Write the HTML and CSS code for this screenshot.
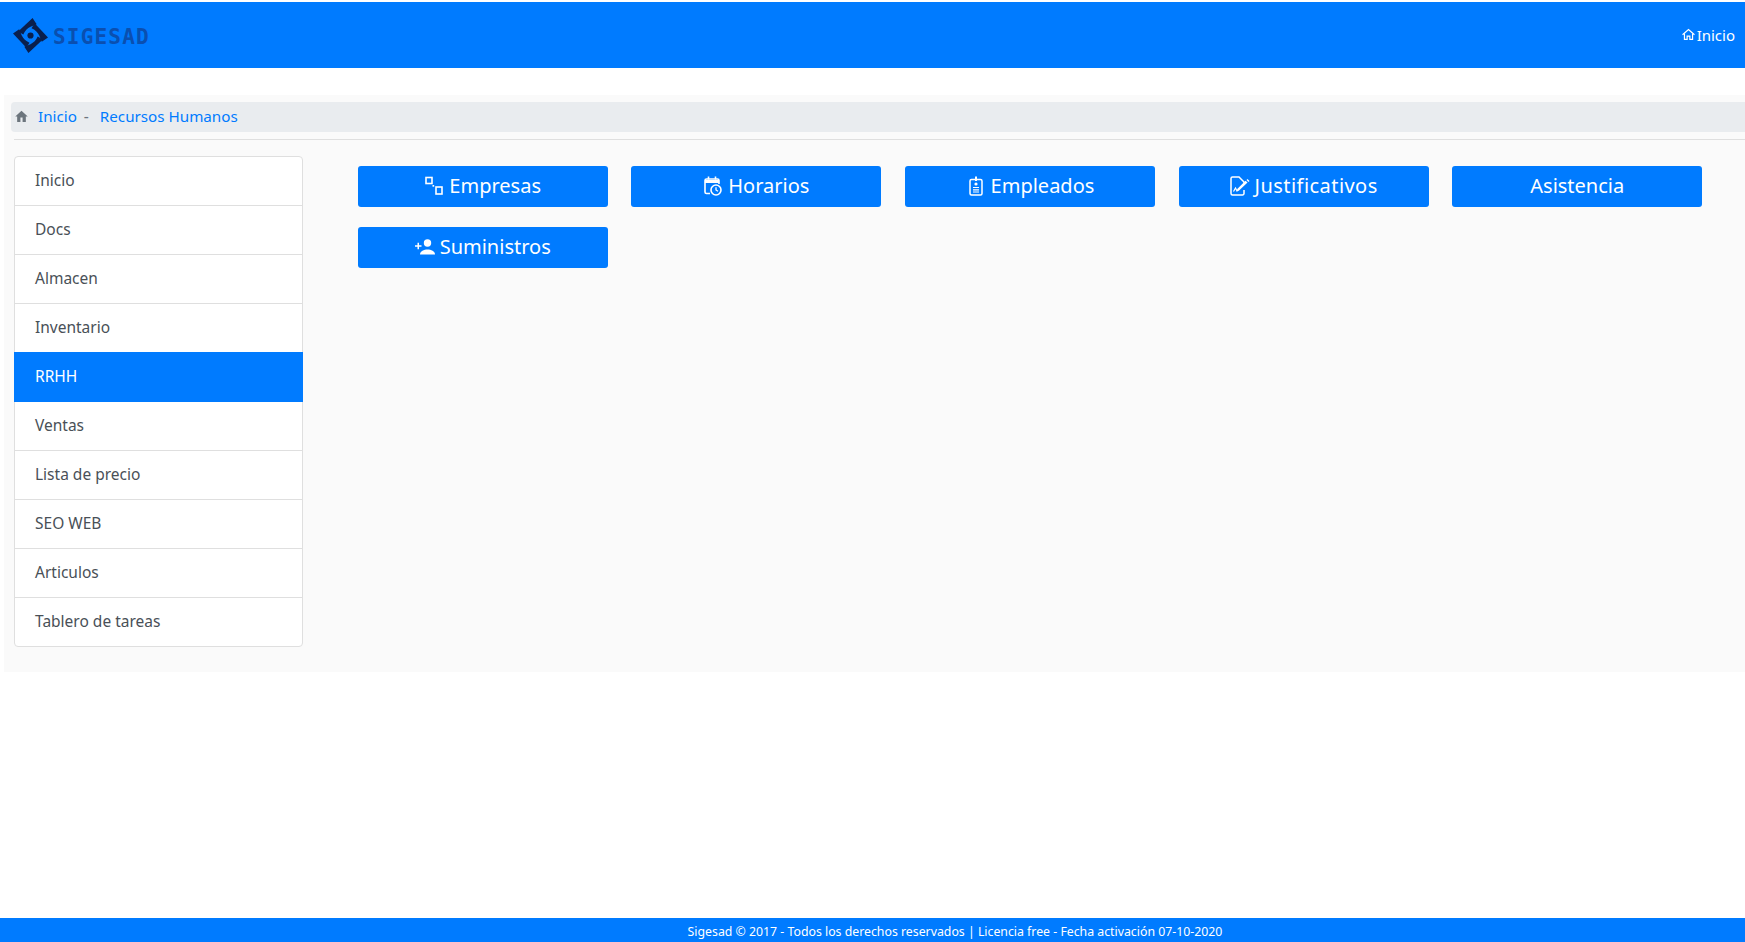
FILE: index.html
```html
<!DOCTYPE html>
<html lang="es">
<head>
    <meta charset="UTF-8">
    <meta name="viewport" content="width=device-width, initial-scale=1.0">
    <title>Sigesad</title>
    <link rel="stylesheet" href="styles.css">
</head>
<body>
    <header class="topbar">
        <a class="brand" href="#">
            <svg class="brand-logo" viewBox="0 0 34 34" fill="#0a1f4d">
                <path d="M5 13L19 0l4 6-6 2.500C14 10 11.500 12.500 10 16z"/>
                <path transform="rotate(90 17 17)" d="M5 13L19 0l4 6-6 2.500C14 10 11.500 12.500 10 16z"/>
                <path transform="rotate(180 17 17)" d="M5 13L19 0l4 6-6 2.500C14 10 11.500 12.500 10 16z"/>
                <path transform="rotate(270 17 17)" d="M5 13L19 0l4 6-6 2.500C14 10 11.500 12.500 10 16z"/>
                <circle cx="17" cy="17" r="3"/>
            </svg>
            <span class="brand-name">SIGESAD</span>
        </a>
        <a class="top-link" href="#">
            <svg class="top-icon" viewBox="0 0 24 24" fill="none" stroke="#fff" stroke-width="2.200">
                <path d="M1 12.500L12 3l11 9.500"/>
                <path d="M4.500 10v11h5v-6h5v6h5V10"/>
            </svg>Inicio
        </a>
    </header>

    <main class="content">
        <nav class="crumbs">
            <svg class="crumb-icon" viewBox="0 0 24 24" fill="#6c757d">
                <path d="M10 22v-8h4v8h6v-10h3.500L12 1.500.5 12H4v10z"/>
            </svg>
            <a href="#">Inicio</a>
            <span class="crumb-sep">-</span>
            <a href="#">Recursos Humanos</a>
        </nav>
        <hr class="rule">

        <div class="columns">
            <ul class="side-menu">
                <li>Inicio</li>
                <li>Docs</li>
                <li>Almacen</li>
                <li>Inventario</li>
                <li class="active">RRHH</li>
                <li>Ventas</li>
                <li>Lista de precio</li>
                <li>SEO WEB</li>
                <li>Articulos</li>
                <li>Tablero de tareas</li>
            </ul>

            <div class="actions">
                <a class="action" href="#">
                    <svg class="action-icon" viewBox="0 0 20 20" fill="none" stroke="#fff" stroke-width="1.600">
                        <rect x="2" y="1.500" width="6" height="6"/>
                        <rect x="12" y="11" width="6" height="7"/>
                        <rect x="8.500" y="9" width="1.700" height="1.700" fill="#fff" stroke="none"/>
                    </svg>Empresas
                </a>
                <a class="action" href="#">
                    <svg class="action-icon" viewBox="0 0 20 20" fill="none" stroke="#fff" stroke-width="1.600">
                        <path d="M7 17.500H3.500A1.500 1.500 0 0 1 2 16V4.500A1.500 1.500 0 0 1 3.500 3h11A1.500 1.500 0 0 1 16 4.500V8"/>
                        <path d="M2 5.500h14" stroke-width="3"/>
                        <path d="M5.500 .5v3M12.500 .5v3"/>
                        <circle cx="13" cy="14" r="5"/>
                        <path d="M13 11.200V14l2 1.300" stroke-width="1.300"/>
                    </svg>Horarios
                </a>
                <a class="action" href="#">
                    <svg class="action-icon" viewBox="0 0 20 20" fill="none" stroke="#fff" stroke-width="1.500">
                        <rect x="4" y="3.500" width="12" height="15.500" rx="1.500"/>
                        <path d="M10 .5v4.500" stroke-width="2"/>
                        <circle cx="10" cy="8" r="1.600" fill="#fff" stroke="none"/>
                        <path d="M7 11.500h6M7 13.800h6M7 16h6" stroke-width="1.200"/>
                    </svg>Empleados
                </a>
                <a class="action" href="#">
                    <svg class="action-icon" viewBox="0 0 20 20" fill="none" stroke="#fff" stroke-width="1.500">
                        <path d="M14 14v3.500a1.500 1.500 0 0 1-1.500 1.500h-10A1.500 1.500 0 0 1 1 17.500v-15A1.500 1.500 0 0 1 2.500 1H9l5 5v1"/>
                        <path d="M3.500 15.500l2-3.500 1.500 3 2-2" stroke-width="1.200"/>
                        <path d="M8.500 15l9-8.500-2-1.800-8.500 8.500z" fill="#fff" stroke="none"/>
                        <path d="M16.500 4l1-1 2 2-1 1z" fill="#fff" stroke="none"/>
                    </svg><span class="spaced">Justificativos</span>
                </a>
                <a class="action" href="#">Asistencia</a>
                <a class="action" href="#">
                    <svg class="action-icon wide" viewBox="0 0 20 16" fill="#fff">
                        <circle cx="12.500" cy="4" r="3.700"/>
                        <path d="M5 15.500c0-3.500 4-5 7.500-5s7.500 1.500 7.500 5z"/>
                        <path d="M0 6.200h2.500V3.700h1.500v2.500h2.500v1.500H4v2.500H2.500V7.700H0z"/>
                    </svg>Suministros
                </a>
            </div>
        </div>
    </main>

    <footer class="footer">Sigesad © 2017 - Todos los derechos reservados | Licencia free - Fecha activación 07-10-2020</footer>
</body>
</html>
```

FILE: styles.css
```css
body {
    margin: 0;
    padding-top: 2px;
    box-sizing: border-box;
    min-height: 100vh;
    display: flex;
    flex-direction: column;
    background-color: #fff;
    color: #495057;
    font-family: "Noto Sans", "Open Sans", sans-serif;
    font-size: 15.500px;
}

a {
    text-decoration: none;
}

.topbar {
    height: 66px;
    flex-shrink: 0;
    display: flex;
    align-items: center;
    justify-content: space-between;
    padding: 0 10px 0 13px;
    background-color: #007bff;
}

.brand {
    display: flex;
    align-items: center;
    gap: 5px;
}

.brand-logo {
    width: 35px;
    height: 35px;
}

.brand-name {
    padding-top: 3px;
    color: #0a4fb0;
    font-family: "DejaVu Sans Mono", monospace;
    font-size: 21px;
    font-weight: 700;
    letter-spacing: 1.200px;
}

.top-link {
    display: flex;
    align-items: center;
    gap: 2px;
    padding-bottom: 1px;
    color: #fff;
    font-size: 15px;
}

.top-icon {
    width: 13px;
    height: 13px;
}

.content {
    margin: 27px 0 0 4px;
    padding: 7px 0 25px 7px;
    background-color: #fafafa;
}

.crumbs {
    height: 28px;
    padding: 0 0 2px 4px;
    display: flex;
    align-items: center;
    border-radius: 4px 0 0 4px;
    background-color: #e9ecef;
}

.crumbs a {
    color: #007bff;
    font-size: 15.200px;
}

.crumb-icon {
    width: 13px;
    height: 13px;
    margin-right: 10px;
}

.crumb-sep {
    margin: 0 11px 0 7px;
    color: #6c757d;
}

.rule {
    height: 1px;
    margin: 7px 0 16px 3px;
    border: 0;
    background-color: #dfdfdf;
}

.columns {
    display: flex;
}

.side-menu {
    width: 289px;
    flex-shrink: 0;
    box-sizing: border-box;
    margin: 0 0 0 3px;
    padding: 0;
    list-style: none;
    background-color: #fff;
    border: 1px solid #dfdfdf;
    border-radius: 4px;
}

.side-menu li {
    height: 46px;
    padding: 0 0 2px 20px;
    display: flex;
    align-items: center;
    border-bottom: 1px solid #dfdfdf;
}

.side-menu li:last-child {
    border-bottom: 0;
}

.side-menu .active {
    margin: -1px -1px 0;
    padding-left: 21px;
    height: 48px;
    border-bottom: 0;
    background-color: #007bff;
    color: #fff;
}

.actions {
    display: grid;
    grid-template-columns: repeat(5, 250px);
    grid-auto-rows: 41px;
    column-gap: 23.650px;
    row-gap: 20px;
    margin: 10px 0 0 54.700px;
}

.action {
    display: flex;
    align-items: center;
    justify-content: center;
    gap: 5px;
    padding-bottom: 2px;
    box-sizing: border-box;
    border-radius: 3px;
    background-color: #007bff;
    color: #fff;
    font-size: 20px;
}

.action-icon {
    width: 20px;
    height: 20px;
}

.action-icon.wide {
    height: 16px;
}

.spaced {
    letter-spacing: 0.450px;
}

.footer {
    margin-top: auto;
    height: 24px;
    flex-shrink: 0;
    display: flex;
    align-items: center;
    justify-content: center;
    padding: 2px 0 0 165px;
    box-sizing: border-box;
    background-color: #007bff;
    color: #fff;
    font-size: 12.300px;
}
```
